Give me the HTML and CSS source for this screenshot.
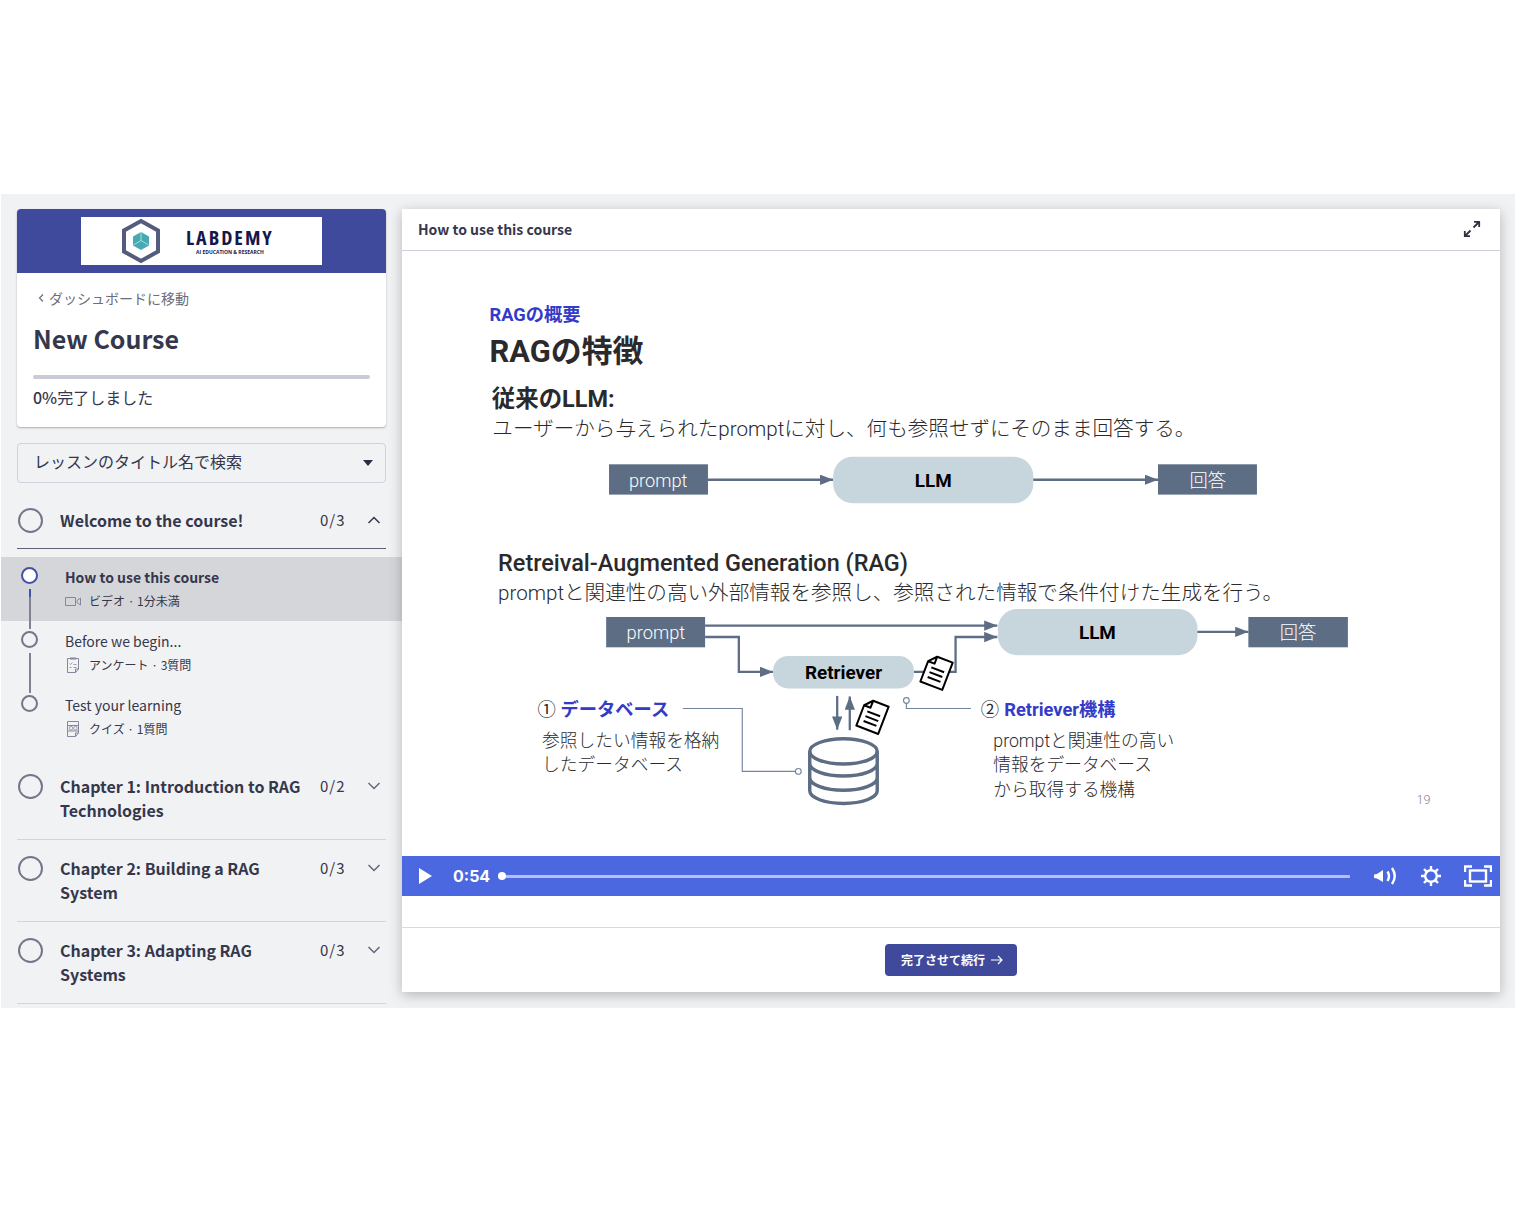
FILE: index.html
```html
<!DOCTYPE html>
<html lang="ja">
<head>
<meta charset="utf-8">
<meta name="viewport" content="width=device-width, initial-scale=1">
<title>New Course</title>
<link rel="stylesheet" href="styles.css">
</head>
<body>
<div class="app">
  <aside class="sidebar">
    <section class="course-card">
      <div class="brand">
        <div class="logo">
          <svg class="logo-mark" viewBox="0 0 40 46" width="40" height="46" aria-hidden="true">
            <path d="M20 3 L37 12.500V33.500L20 43L3 33.500V12.500Z" fill="#fff" stroke="#545b7d" stroke-width="4"/>
            <path d="M20 14L28 18.500V27.500L20 32L12 27.500V18.500Z" fill="#47aab3"/>
            <path d="M20 14V22.500L12.500 27M20 22.500L27.500 27" fill="none" stroke="#a5dbe0" stroke-width="1"/>
          </svg>
          <div class="logo-words">
            <span class="logo-name">LABDEMY</span>
            <span class="logo-tag">AI EDUCATION &amp; RESEARCH</span>
          </div>
        </div>
      </div>
      <div class="course-info">
        <a class="back" href="#">
          <svg viewBox="0 0 6 10" width="6" height="10" aria-hidden="true"><path d="M5 1.500L1.500 5L5 8.500" fill="none" stroke="currentColor" stroke-width="1.200"/></svg>
          ダッシュボードに移動</a>
        <h1 class="course-title">New Course</h1>
        <div class="progress"></div>
        <p class="progress-text"><b>0%</b>完了しました</p>
      </div>
    </section>

    <div class="search">
      <select class="search-select" aria-label="レッスンのタイトル名で検索"><option>レッスンのタイトル名で検索</option></select>
      <svg class="caret" viewBox="0 0 10 6" width="10" height="6" aria-hidden="true"><path d="M0 0H10L5 6Z" fill="#2b2e43"/></svg>
    </div>

    <button class="chapter open" type="button">
      <span class="ring"></span><span class="chapter-name">Welcome to the course!</span><span class="count">0/3</span>
      <svg class="chev" viewBox="0 0 14 8" width="14" height="8" aria-hidden="true"><path d="M1.500 7L7 1.500L12.500 7" fill="none" stroke="currentColor" stroke-width="1.500"/></svg>
    </button>
    <ul class="lessons">
      <li class="lesson current">
        <span class="dot"></span>
        <a class="lesson-link" href="#">
          <span class="lesson-name">How to use this course</span>
          <span class="meta">
            <svg viewBox="0 0 16 16" width="16" height="16" aria-hidden="true"><path d="M.5 4.500H10.500V12.500H.5ZM12 7.500L15.500 5V12L12 9.500Z" fill="none" stroke="currentColor"/></svg>
            ビデオ · 1分未満</span>
        </a>
      </li>
      <li class="lesson">
        <span class="dot"></span>
        <a class="lesson-link" href="#">
          <span class="lesson-name">Before we begin...</span>
          <span class="meta">
            <svg viewBox="0 0 16 16" width="16" height="16" aria-hidden="true"><path d="M2.500 1.500H13.500V12L10.500 15.500H2.500ZM13.500 12H10.500V15.500" fill="none" stroke="currentColor"/><path d="M5 1.500H11" stroke="currentColor" stroke-width="2"/><path d="M4.500 6.500L5.500 7.500L7.500 5.500M4.500 10.500H6.500M8.500 7.500H11.500M8.500 10.500H11.500" fill="none" stroke="currentColor" stroke-width=".8"/></svg>
            アンケート · 3質問</span>
        </a>
      </li>
      <li class="lesson">
        <span class="dot"></span>
        <a class="lesson-link" href="#">
          <span class="lesson-name">Test your learning</span>
          <span class="meta">
            <svg viewBox="0 0 16 16" width="16" height="16" aria-hidden="true"><path d="M2.500 .5H13.500V12L10.500 15.500H2.500ZM13.500 12H10.500V15.500M2.500 4.500H13.500M2.500 10H13.500" fill="none" stroke="currentColor"/><circle cx="6" cy="7.200" r="1.800" fill="none" stroke="currentColor" stroke-width=".8"/><circle cx="10.500" cy="7.200" r="1.800" fill="none" stroke="currentColor" stroke-width=".8"/></svg>
            クイズ · 1質問</span>
        </a>
      </li>
    </ul>
    <button class="chapter" type="button">
      <span class="ring"></span><span class="chapter-name">Chapter 1: Introduction to RAG Technologies</span><span class="count">0/2</span>
      <svg class="chev" viewBox="0 0 14 8" width="14" height="8" aria-hidden="true"><path d="M1.500 1L7 6.500L12.500 1" fill="none" stroke="currentColor" stroke-width="1.500"/></svg>
    </button>
    <button class="chapter" type="button">
      <span class="ring"></span><span class="chapter-name">Chapter 2: Building a RAG System</span><span class="count">0/3</span>
      <svg class="chev" viewBox="0 0 14 8" width="14" height="8" aria-hidden="true"><path d="M1.500 1L7 6.500L12.500 1" fill="none" stroke="currentColor" stroke-width="1.500"/></svg>
    </button>
    <button class="chapter" type="button">
      <span class="ring"></span><span class="chapter-name">Chapter 3: Adapting RAG Systems</span><span class="count">0/3</span>
      <svg class="chev" viewBox="0 0 14 8" width="14" height="8" aria-hidden="true"><path d="M1.500 1L7 6.500L12.500 1" fill="none" stroke="currentColor" stroke-width="1.500"/></svg>
    </button>
  </aside>

  <main class="content">
    <header class="content-head">
      <h2 class="content-title">How to use this course</h2>
      <button class="icon-btn" type="button" aria-label="全画面">
        <svg viewBox="0 0 18 18" width="18" height="18" aria-hidden="true"><path d="M10.500 7.500L16 2M11 1.800H16.200V7M7.500 10.500L2 16M1.800 11V16.200H7" fill="none" stroke="#2f3148" stroke-width="1.800"/></svg>
      </button>
    </header>

    <svg class="slide" viewBox="0 0 1920 1058" role="img" aria-label="RAGの特徴">
      <defs>
        <marker id="head" markerUnits="userSpaceOnUse" markerWidth="24" markerHeight="20" refX="23" refY="9" orient="auto"><path d="M0 0L23 9L0 18Z" fill="#5d6d84"/></marker>
        <g id="doc">
          <path d="M-9 -26H20V25H-21V-13ZM-9 -26V-13H-21" fill="#fff" stroke="#000" stroke-width="3.500" stroke-linejoin="round"/>
          <path d="M-12 -5H12M-12 4H12M-12 13H12" stroke="#000" stroke-width="3.500"/>
        </g>
      </defs>
      <text class="kicker" x="153" y="122">RAGの概要</text>
      <text class="headline" x="153" y="195">RAGの特徴</text>
      <text class="subhead" x="157" y="272">従来のLLM:</text>
      <text class="lead" x="158" y="323">ユーザーから与えられたpromptに対し、何も参照せずにそのまま回答する。</text>

      <path class="wire" d="M535 400H754" marker-end="url(#head)"/>
      <path class="wire" d="M1103 400H1322" marker-end="url(#head)"/>
      <rect class="io" x="362" y="373" width="173" height="53"/>
      <text class="io-label" x="448" y="412">prompt</text>
      <rect class="model" x="754" y="360" width="350" height="81" rx="34"/>
      <text class="model-label" x="929" y="412">LLM</text>
      <rect class="io" x="1322" y="373" width="173" height="53"/>
      <text class="io-label" x="1409" y="412">回答</text>

      <text class="subhead latin" x="168" y="559">Retreival-Augmented Generation (RAG)</text>
      <text class="lead" x="168" y="610">promptと関連性の高い外部情報を参照し、参照された情報で条件付けた生成を行う。</text>

      <path class="wire" d="M530 655H1041" marker-end="url(#head)"/>
      <path class="wire" d="M530 675H589V736H649" marker-end="url(#head)"/>
      <path class="wire" d="M895 736H968V675H1041" marker-end="url(#head)"/>
      <path class="wire" d="M1390 666H1480" marker-end="url(#head)"/>
      <path class="wire" d="M761 778V837" marker-end="url(#head)"/>
      <path class="wire" d="M783 838V779" marker-end="url(#head)"/>
      <rect class="io" x="357" y="640" width="173" height="53"/>
      <text class="io-label" x="444" y="678">prompt</text>
      <rect class="model" x="649" y="708" width="246" height="57" rx="26"/>
      <text class="model-label" x="772" y="749">Retriever</text>
      <rect class="model" x="1042" y="626" width="349" height="81" rx="34"/>
      <text class="model-label" x="1216" y="678">LLM</text>
      <rect class="io" x="1480" y="640" width="174" height="53"/>
      <text class="io-label" x="1567" y="678">回答</text>
      <use href="#doc" transform="translate(935 737) rotate(21)"/>
      <use href="#doc" transform="translate(823 814) rotate(21)"/>

      <g fill="none" stroke="#5d6d84" stroke-width="6">
        <ellipse cx="772" cy="875" rx="59" ry="22"/>
        <path d="M713 875V944A59 22 0 0 0 831 944V875M713 896A59 22 0 0 0 831 896M713 921A59 22 0 0 0 831 921"/>
      </g>
      <path class="leader" d="M491 800H595V910H688"/>
      <circle class="leader" cx="693" cy="910" r="5"/>
      <path class="leader" d="M882 792V800H995"/>
      <circle class="leader" cx="882" cy="786" r="5"/>

      <text class="numeral" x="237" y="813">①</text>
      <text class="kicker" x="277" y="813">データベース</text>
      <text class="note" x="245" y="868">参照したい情報を格納</text>
      <text class="note" x="245" y="910">したデータベース</text>
      <text class="numeral" x="1012" y="813">②</text>
      <text class="kicker" x="1053" y="813">Retriever機構</text>
      <text class="note" x="1034" y="868">promptと関連性の高い</text>
      <text class="note" x="1034" y="910">情報をデータベース</text>
      <text class="note" x="1034" y="953">から取得する機構</text>
      <text class="page-no" x="1774" y="967">19</text>
    </svg>

    <div class="player">
      <button class="icon-btn play" type="button" aria-label="再生">
        <svg viewBox="0 0 14 16" width="14" height="16" aria-hidden="true"><path d="M1 0L14 8L1 16Z" fill="#fff"/></svg>
      </button>
      <span class="time">0:54</span>
      <input class="seek" type="range" min="0" max="54" value="0" aria-label="再生位置">
      <div class="player-tools">
        <button class="icon-btn" type="button" aria-label="音量">
          <svg viewBox="0 0 26 20" width="26" height="20" aria-hidden="true"><path d="M2 8.500V12L5 12.500L11 16V4L5 8Z" fill="#fff"/><path d="M15.500 5.500Q18.500 10 15.500 15M20 2Q25.500 10 20 18" fill="none" stroke="#fff" stroke-width="2.400"/></svg>
        </button>
        <button class="icon-btn" type="button" aria-label="設定">
          <svg viewBox="0 0 22 22" width="22" height="22" aria-hidden="true"><circle cx="11" cy="11" r="5.800" fill="none" stroke="#fff" stroke-width="2.400"/><path d="M11 1V5M11 17V21M1 11H5M17 11H21M4 4L6.800 6.800M15.200 15.200L18 18M4 18L6.800 15.200M15.200 6.800L18 4" stroke="#fff" stroke-width="2.400"/></svg>
        </button>
        <button class="icon-btn" type="button" aria-label="フルスクリーン">
          <svg viewBox="0 0 28 22" width="28" height="22" aria-hidden="true"><path d="M1 7V1.500H8M20 1.500H27V7M27 15V20.500H20M8 20.500H1V15" fill="none" stroke="#fff" stroke-width="2.400"/><rect x="6" y="5.500" width="16" height="11" fill="none" stroke="#fff" stroke-width="2.400"/></svg>
        </button>
      </div>
    </div>

    <footer class="content-foot">
      <button class="complete" type="button">完了させて続行
        <svg viewBox="0 0 12 10" width="12" height="10" aria-hidden="true"><path d="M0 5H11M7 1L11 5L7 9" fill="none" stroke="#fff" stroke-width="1.200"/></svg>
      </button>
    </footer>
  </main>
</div>
</body>
</html>
```
FILE: styles.css
```css
* { box-sizing: border-box; }

body {
  margin: 0;
  background: #fff;
  color: #35374c;
  font: 16px/24px "Noto Sans CJK JP", sans-serif;
}

button, select { font: inherit; color: inherit; }
h1, h2, p, ul { margin: 0; padding: 0; }
svg { display: block; flex: none; }

.app {
  display: flex;
  align-items: flex-start;
  margin: 194px 11px 0 1px;
  padding: 15px 15px 0 0;
  background: #f1f2f4;
}

/* Sidebar */
.sidebar {
  flex: none;
  width: 401px;
  padding-bottom: 4px;
}

.course-card {
  margin: 0 16px;
  background: #fff;
  border-radius: 4px;
  overflow: hidden;
  box-shadow: 0 1px 2px rgba(40, 42, 60, .35);
}

.brand {
  display: flex;
  justify-content: center;
  padding: 8px;
  background: #3f4a9d;
}

.logo {
  display: flex;
  align-items: center;
  gap: 25px;
  width: 241px;
  height: 48px;
  padding-left: 40px;
  background: #fff;
}

.logo-words {
  display: flex;
  flex-direction: column;
  align-items: center;
  color: #17174b;
}

.logo-name {
  font: 700 20px/22px "Open Sans", sans-serif;
  font-stretch: condensed;
  letter-spacing: 2px;
}

.logo-tag { font: 700 5px/6px "Open Sans", sans-serif; }

.course-info { padding: 13px 16px 18px; }

.back {
  display: flex;
  align-items: center;
  gap: 5px;
  padding-left: 5px;
  font-size: 14px;
  color: #6b6d80;
  text-decoration: none;
}

.course-title {
  margin-top: 10px;
  font-size: 25px;
  line-height: 36px;
  font-weight: 700;
}

.progress {
  height: 4px;
  margin: 19px 0 6px;
  border-radius: 2px;
  background: #c8cad6;
}

.progress-text b { font-weight: 500; }

.search {
  display: flex;
  align-items: center;
  margin: 16px 16px 9px;
  padding-right: 12px;
  border: 1px solid #cfd1db;
  border-radius: 4px;
}

.search-select {
  flex: 1;
  height: 38px;
  padding: 0 0 4px 16px;
  border: 0;
  background: none;
  appearance: none;
}

.chapter {
  display: grid;
  grid-template-columns: 25px 242px 1fr 14px;
  column-gap: 18px;
  align-items: start;
  width: 369px;
  margin: 0 16px;
  padding: 16px 6px 17px 0;
  border: 0;
  border-bottom: 1px solid #d3d5dc;
  background: none;
  text-align: left;
}

.chapter.open {
  padding-bottom: 16px;
  border-bottom-color: #5e6073;
}

.lessons + .chapter { margin-top: 9px; }

.ring {
  width: 25px;
  height: 25px;
  margin: 0 0 -1px 1px;
  border: 2px solid #74768a;
  border-radius: 50%;
}

.chapter-name { font-weight: 700; }

.count {
  justify-self: end;
  margin-right: 3px;
  font-size: 15px;
  letter-spacing: 1px;
}

.chev { margin-top: 8px; color: #65677b; }
.open .chev { color: #35374c; }

.lessons {
  margin-top: 8px;
  list-style: none;
}

.lesson {
  display: flex;
  gap: 27px;
  height: 64px;
  padding: 8px 20px;
}

.current { background: #d5d6da; }

.dot {
  flex: none;
  display: flex;
  flex-direction: column;
  align-items: center;
  width: 17px;
  height: 17px;
  margin-top: 2px;
  border: 2px solid #74768a;
  border-radius: 50%;
}

/* connector between consecutive lessons */
.lesson:not(:last-child) .dot::after {
  content: "";
  flex: none;
  width: 2px;
  height: 40px;
  margin-top: 20px;
  background: #808294;
}

.current .dot {
  border-color: #4450a8;
  background: #fff;
}

.lesson.current .dot::after { background: linear-gradient(#4450a8 8px, #808294 8px); }

.lesson-link {
  color: inherit;
  text-decoration: none;
  font-size: 14px;
}

.lesson-name { display: block; }
.current .lesson-name { font-weight: 700; }

.meta {
  display: flex;
  align-items: center;
  gap: 8px;
  font-size: 12px;
}

.meta svg { color: #85879a; }

/* Lesson panel */
.content {
  flex: 1;
  min-width: 0;
  background: #fff;
  box-shadow: 0 3px 12px rgba(0, 0, 0, .25);
}

.content-head {
  display: flex;
  align-items: center;
  justify-content: space-between;
  height: 42px;
  padding: 0 19px 2px 16px;
  border-bottom: 1px solid #cfcfdb;
}

.content-title {
  font-size: 14px;
  font-weight: 700;
}

.icon-btn {
  padding: 0;
  border: 0;
  background: none;
}

.slide {
  width: 100%;
  height: auto;
  font-family: Roboto, "Noto Sans CJK JP", sans-serif;
}

.kicker { font-size: 32px; font-weight: 700; fill: #343bc8; }
.headline { font-size: 54px; font-weight: 700; fill: #2a2a2c; }
.subhead { font-size: 41px; font-weight: 700; fill: #2a2a2c; }
.subhead.latin { font-weight: 500; }
.lead { font-size: 36px; font-weight: 300; fill: #2a2a2c; }
.note { font-size: 31px; font-weight: 300; fill: #2a2a2c; }
.numeral { font-size: 32px; fill: #2a2a2c; }
.io { fill: #5d6d84; }
.io-label { font-size: 32px; font-weight: 300; fill: #fff; text-anchor: middle; }
.model { fill: #c7d5dc; }
.model-label { font-size: 33px; font-weight: 700; fill: #000; text-anchor: middle; }
.page-no { font-size: 22px; font-weight: 300; fill: #7d8698; }
.wire { fill: none; stroke: #5d6d84; stroke-width: 4; }
.leader { fill: none; stroke: #7485a0; stroke-width: 2; }

.player {
  display: flex;
  align-items: center;
  height: 40px;
  padding: 0 8px 0 16px;
  background: #4c68e0;
}

.time {
  margin: 0 8px 0 21px;
  font: 700 16px/24px Inter, sans-serif;
  color: #fff;
}

.seek {
  flex: 1;
  height: 8px;
  margin: 0;
  appearance: none;
  background: linear-gradient(#b3c0f4, #b3c0f4) center / 100% 3px no-repeat;
}

.seek::-webkit-slider-thumb {
  appearance: none;
  width: 8px;
  height: 8px;
  border-radius: 50%;
  background: #fff;
}

.player-tools {
  display: flex;
  align-items: center;
  gap: 22px;
  margin-left: 22px;
}

.content-foot {
  display: flex;
  justify-content: center;
  margin-top: 31px;
  padding: 16px;
  border-top: 1px solid #d8dae0;
}

.complete {
  display: flex;
  align-items: center;
  gap: 6px;
  height: 32px;
  padding: 0 14px 0 16px;
  border: 0;
  border-radius: 4px;
  background: #3f4a9d;
  color: #fff;
  font-size: 12px;
  font-weight: 700;
}
```
